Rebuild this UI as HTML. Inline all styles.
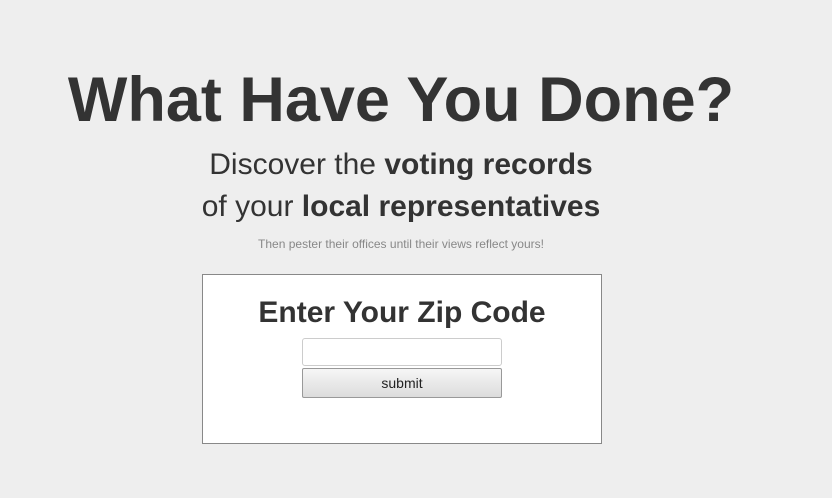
<!DOCTYPE html>
<html><head><style>
body{margin:0;width:832px;height:498px;background:#eeeeee;font-family:"Liberation Sans",sans-serif;color:#333;position:relative;overflow:hidden}
.t{position:absolute;left:0;width:802px;text-align:center;top:64px;font-size:63px;font-weight:bold;line-height:72px;white-space:nowrap}
.s{position:absolute;left:0;width:802px;text-align:center;font-size:30px;line-height:34px;white-space:nowrap}
.n{position:absolute;left:0;width:802px;text-align:center;top:237px;font-size:12px;color:#888}
.box{position:absolute;left:202px;top:274px;width:398px;height:168px;background:#fff;border:1px solid #888}
.h{position:absolute;left:0;width:398px;top:20px;text-align:center;font-size:30px;font-weight:bold;line-height:36px}
.in{position:absolute;left:99px;top:63px;height:28px;border:1px solid #ccc;border-radius:3px;box-sizing:border-box;width:200px}
.b{position:absolute;left:99px;top:93px;width:200px;height:30px;box-sizing:border-box;border:1px solid #999;border-radius:2px;background:linear-gradient(#f6f6f6,#dcdcdc);text-align:center;font-size:14px;line-height:28px;color:#222}
</style></head><body>
<div class="t">What Have You Done?</div>
<div class="s" style="top:148px">Discover the <b>voting records</b></div>
<div class="s" style="top:190px">of your <b>local representatives</b></div>
<div class="n">Then pester their offices until their views reflect yours!</div>
<div class="box">
<div class="h">Enter Your Zip Code</div>
<div class="in"></div>
<div class="b">submit</div>
</div>
</body></html>
